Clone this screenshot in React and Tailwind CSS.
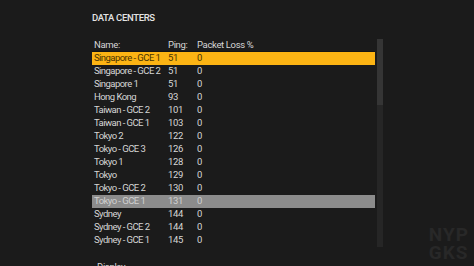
import React from 'react'

const servers = [
  ['Singapore - GCE 1', 51, 0],
  ['Singapore - GCE 2', 51, 0],
  ['Singapore 1', 51, 0],
  ['Hong Kong', 93, 0],
  ['Taiwan - GCE 2', 101, 0],
  ['Taiwan - GCE 1', 103, 0],
  ['Tokyo 2', 122, 0],
  ['Tokyo - GCE 3', 126, 0],
  ['Tokyo 1', 128, 0],
  ['Tokyo', 129, 0],
  ['Tokyo - GCE 2', 130, 0],
  ['Tokyo - GCE 1', 131, 0],
  ['Sydney', 144, 0],
  ['Sydney - GCE 2', 144, 0],
  ['Sydney - GCE 1', 145, 0],
]

const Row = ({ name, ping, loss, state }) => {
  const look =
    state === 'active'
      ? 'bg-[#fcb414] text-[#4a3300]'
      : state === 'hover'
      ? 'bg-[#8c8c8c] text-[#d0d0d0]'
      : 'text-[#d6d6d6]'
  return (
    <div className={`flex h-[13px] items-center whitespace-nowrap pl-[2px] ${look}`}>
      <span className="w-[74px] tracking-[-0.55px]">{name}</span>
      <span className="w-[29px]">{ping}</span>
      <span>{loss}</span>
    </div>
  )
}

const App = () => {
  return (
    <div
      className="relative h-[266px] w-[474px] overflow-hidden bg-[#1b1b1b] text-[9.5px] leading-none tracking-[-0.35px]"
      style={{ fontFamily: 'Roboto, "Liberation Sans", sans-serif' }}
    >
      <div className="pl-[92px] pt-[13px]">
        <div className="text-[9.5px] font-medium text-[#e4e4e4]">DATA CENTERS</div>
        <div className="mt-[16px] flex">
          <div className="w-[283px]">
            <div className="flex h-[12px] items-center whitespace-nowrap pl-[2px] text-[#d6d6d6]">
              <span className="w-[74px]">Name:</span>
              <span className="w-[29px]">Ping:</span>
              <span>Packet Loss %</span>
            </div>
            <div className="border-t border-[#141414]">
              {servers.map(([name, ping, loss], i) => (
                <Row
                  key={name}
                  name={name}
                  ping={ping}
                  loss={loss}
                  state={i === 0 ? 'active' : i === 11 ? 'hover' : ''}
                />
              ))}
            </div>
          </div>
          <div className="ml-[2px] flex h-[208px] w-[6px] flex-col bg-[#262626]">
            <div className="h-[66px] bg-[#353535]" />
          </div>
        </div>
        <div className="mt-[15px] pl-[5px] text-[#d6d6d6]">Display</div>
      </div>
      <div className="absolute bottom-[4px] right-[5px] text-[19px] font-bold leading-[18px] tracking-[1px] text-[#282828]">
        <div>NYP</div>
        <div>GKS</div>
      </div>
    </div>
  )
}

export default App
